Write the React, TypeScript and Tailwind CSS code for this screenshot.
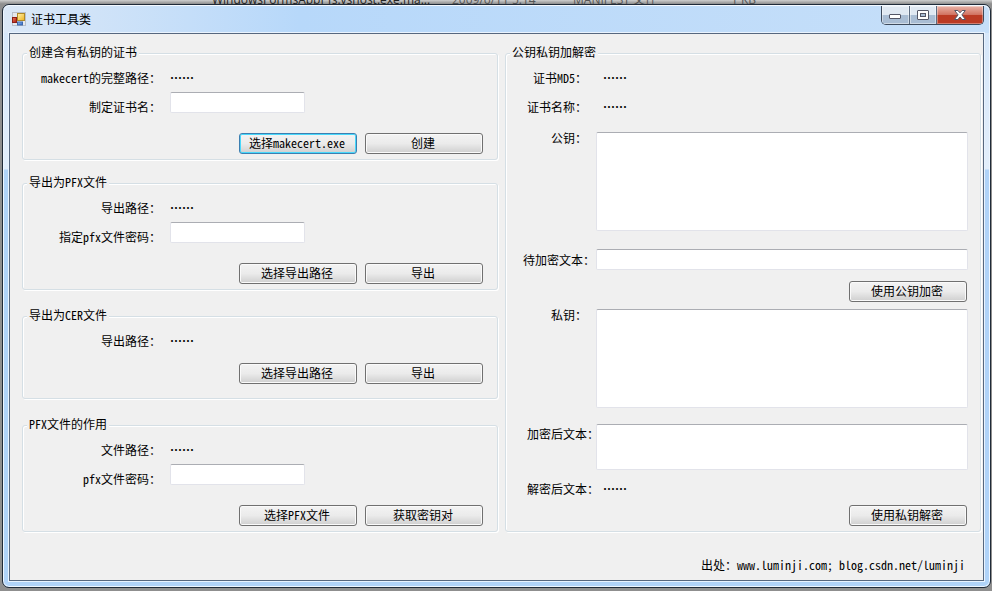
import { type ReactNode } from "react";
import clsx from "clsx";

const ui = "font-['Noto_Sans_CJK_SC','Liberation_Sans',sans-serif]";

/** Full-width characters with Latin runs set in the font's own half-width forms. */
function Mixed({ children }: { children: string }) {
  return (
    <>
      {children.split(/([\x20-\x7e]+)/).map((part, i) =>
        i % 2 ? (
          <span key={i} className="leading-none [font-feature-settings:'hwid']">
            {part}
          </span>
        ) : (
          part
        ),
      )}
    </>
  );
}

function PushButton({ children, focused = false }: { children: string; focused?: boolean }) {
  return (
    <button
      type="button"
      className={clsx(
        "flex h-[21px] w-[118px] items-center justify-center rounded-[3px] border bg-linear-to-b from-[#f3f3f3] from-0% via-[#ebebeb] via-50% to-[#cfcfcf] to-100% pr-[2px] pb-[2px] leading-5 whitespace-nowrap",
        focused
          ? "border-[#3c7fb1] shadow-[inset_0_0_0_1px_#48d8fb]"
          : "border-[#707070] shadow-[inset_0_0_0_1px_#fafafa]",
      )}
    >
      <span>
        <Mixed>{children}</Mixed>
      </span>
    </button>
  );
}

const box =
  "block resize-none rounded-[2px] border border-[#e2e3ea] border-t-[#abadb3] bg-white px-1 outline-none";

function GroupBox({ title, className, children }: { title: string; className?: string; children: ReactNode }) {
  return (
    <fieldset
      className={clsx(
        "flex min-w-0 flex-col rounded-[3px] border border-[#d5dfe5] shadow-[inset_1px_1px_0_#fff,1px_1px_0_#fff]",
        className,
      )}
    >
      <legend className="ml-1 h-[14px] bg-[#f0f0f0] px-[2px] leading-3 whitespace-nowrap">
        <Mixed>{title}</Mixed>
      </legend>
      {children}
    </fieldset>
  );
}

const leftLabel = "w-[138px] shrink-0 text-right leading-5 whitespace-nowrap";

function ValueRow({ id, label }: { id: string; label: string }) {
  return (
    <div className="mt-2 flex h-5 gap-[9px]">
      <label htmlFor={id} className={leftLabel}>
        <Mixed>{label}</Mixed>
      </label>
      <output id={id} className="leading-5 font-bold">……</output>
    </div>
  );
}

function InputRow({ id, label, type = "text" }: { id: string; label: string; type?: string }) {
  return (
    <div className="mt-1 flex h-[25px] items-start gap-[9px]">
      <label htmlFor={id} className={clsx(leftLabel, "pt-[5px]")}>
        <Mixed>{label}</Mixed>
      </label>
      <input id={id} type={type} className={clsx(box, "h-[21px] w-[135px]")} />
    </div>
  );
}

function ButtonRow({ className, children }: { className: string; children: ReactNode }) {
  return <div className={clsx("flex justify-end gap-2", className)}>{children}</div>;
}

const rightLabel = "w-[90px] shrink-0 leading-5 whitespace-nowrap";

function FormIcon() {
  return (
    <svg width="14" height="14" viewBox="0 0 14 14" aria-hidden="true">
      <defs>
        <linearGradient id="gold" x2="1" y2="1">
          <stop stopColor="#fff3b0" />
          <stop offset="1" stopColor="#efb21c" />
        </linearGradient>
        <linearGradient id="red" x2="1" y2="1">
          <stop stopColor="#f07a5c" />
          <stop offset="1" stopColor="#a81c10" />
        </linearGradient>
        <linearGradient id="blue" x2="1" y2="1">
          <stop stopColor="#9cc4f4" />
          <stop offset="1" stopColor="#2c62c0" />
        </linearGradient>
      </defs>
      <rect x="0.5" y="0.5" width="13" height="13" fill="#e6e9ee" stroke="#b9c0ca" />
      <rect x="5.5" y="1.5" width="7" height="7" fill="url(#gold)" stroke="#b08a28" />
      <rect x="0.5" y="5.5" width="4" height="5" fill="url(#red)" stroke="#8c2018" />
      <rect x="5.5" y="10" width="5" height="3" fill="url(#blue)" stroke="#3d68ac" />
    </svg>
  );
}

const caption =
  "flex items-center justify-center border-r border-[#5b6b80] shadow-[inset_0_0_0_1px_rgba(255,255,255,0.45)]";

function CaptionButtons() {
  return (
    <div className="flex h-[19px] overflow-hidden rounded-b-[5px] border border-t-0 border-[#3d4a5c]">
      <button
        type="button"
        aria-label="最小化"
        className={clsx(caption, "w-7 bg-linear-to-b from-[#dfe8f2] from-50% to-[#a9bdd4] to-50%")}
      >
        <svg width="13" height="6" viewBox="0 0 13 6" className="mt-1">
          <rect x="0.5" y="0.5" width="11" height="4" rx="0.5" fill="#fff" stroke="#535666" />
        </svg>
      </button>
      <button
        type="button"
        aria-label="最大化"
        className={clsx(caption, "w-[27px] bg-linear-to-b from-[#dfe8f2] from-50% to-[#a9bdd4] to-50%")}
      >
        <svg width="12" height="10" viewBox="0 0 12 10">
          <rect x="0.5" y="0.5" width="11" height="9" rx="0.5" fill="#fff" stroke="#535666" />
          <rect x="3.5" y="3.5" width="5" height="3" fill="#a9bdd4" stroke="#535666" />
        </svg>
      </button>
      <button
        type="button"
        aria-label="关闭"
        className="flex w-[46px] items-center justify-center bg-linear-to-b from-[#e8b3a8] from-0% via-[#d0705f] via-50% to-[#bb3a24] to-50% shadow-[inset_0_0_0_1px_rgba(255,255,255,0.35)]"
      >
        <svg width="12" height="10" viewBox="0 0 12 10">
          <path
            d="M.7.5h3.2L6 2.8 8.1.5h3.2L7.9 4.9l3.6 4.6H8.1L6 7 3.9 9.5H.5l3.6-4.6z"
            fill="#fff"
            stroke="#535666"
            strokeWidth="1"
          />
        </svg>
      </button>
    </div>
  );
}

export default function App() {
  return (
    <div
      lang="zh-CN"
      className={clsx(ui, "flex min-h-screen flex-col bg-[#8f8f8f] pr-px pb-[3px] pl-[2px] text-[12px] text-black")}
    >
      <div className="-mr-px -ml-[2px] flex h-1 items-end overflow-hidden bg-linear-to-b from-[#cfcfcf] to-[#8c8c8c] pl-[212px] font-['Open_Sans','Noto_Sans_CJK_SC',sans-serif] leading-2 whitespace-nowrap text-[#555]">
        <span className="w-[240px] text-[#222]">WindowsFormsAppPfs.vshost.exe.ma...</span>
        <span className="w-[121px]">2009/6/11 5:14</span>
        <span className="w-[158px]">MANIFEST 文件</span>
        <span>1 KB</span>
      </div>

      <div className="flex grow flex-col rounded-[7px] border border-[#1f2a38] bg-linear-to-b from-[#d3e5f9] from-0% via-[#e2eefb] via-[164px] to-[#b0d3f8] to-[165px] px-[6px] pb-[6px] shadow-[inset_0_0_0_1px_#eef6ff]">
        <header className="-mx-[5px] flex h-7 items-start justify-between rounded-t-[6px] border-t border-[#f4f9ff] bg-linear-to-r from-[#dbe8f7] via-[#b7d8fa] via-30% to-[#c6dff9] pr-[5px] pl-2">
          <div className="flex h-[26px] items-center gap-[5px]">
            <FormIcon />
            <h1 className="leading-5">证书工具类</h1>
          </div>
          <CaptionButtons />
        </header>

        <main className="flex grow flex-col border border-[#56677f] bg-[#f0f0f0] pt-3 pr-[2px] pl-3 shadow-[0_0_0_1px_#e9f3fe]">
          <div className="grid grid-cols-2 gap-[7px]">
            <div className="flex flex-col">
              <GroupBox title="创建含有私钥的证书" className="pb-[5px]">
                <ValueRow id="makecert-path" label="makecert的完整路径：" />
                <InputRow id="cert-name" label="制定证书名：" />
                <ButtonRow className="mt-4 pr-[14px]">
                  <PushButton focused>选择makecert.exe</PushButton>
                  <PushButton>创建</PushButton>
                </ButtonRow>
              </GroupBox>

              <GroupBox title="导出为PFX文件" className="mt-4 pb-[5px]">
                <ValueRow id="pfx-out" label="导出路径：" />
                <InputRow id="pfx-out-password" type="password" label="指定pfx文件密码：" />
                <ButtonRow className="mt-4 pr-[14px]">
                  <PushButton>选择导出路径</PushButton>
                  <PushButton>导出</PushButton>
                </ButtonRow>
              </GroupBox>

              <GroupBox title="导出为CER文件" className="mt-[19px] pb-[14px]">
                <ValueRow id="cer-out" label="导出路径：" />
                <ButtonRow className="mt-3 pr-[14px]">
                  <PushButton>选择导出路径</PushButton>
                  <PushButton>导出</PushButton>
                </ButtonRow>
              </GroupBox>

              <GroupBox title="PFX文件的作用" className="mt-[19px] pb-[5px]">
                <ValueRow id="pfx-file" label="文件路径：" />
                <InputRow id="pfx-password" type="password" label="pfx文件密码：" />
                <ButtonRow className="mt-4 pr-[14px]">
                  <PushButton>选择PFX文件</PushButton>
                  <PushButton>获取密钥对</PushButton>
                </ButtonRow>
              </GroupBox>
            </div>

            <GroupBox title="公钥私钥加解密" className="pb-1">
              <div className="mt-2 flex h-5 pr-3">
                <label htmlFor="md5" className={clsx(rightLabel, "pl-[27px]")}>
                  <Mixed>证书MD5：</Mixed>
                </label>
                <output id="md5" className="pl-[7px] leading-5 font-bold">……</output>
              </div>
              <div className="mt-[9px] flex h-5 pr-3">
                <label htmlFor="subject" className={clsx(rightLabel, "pl-[21px]")}>证书名称：</label>
                <output id="subject" className="pl-[7px] leading-5 font-bold">……</output>
              </div>
              <div className="mt-[15px] flex items-start pr-3">
                <label htmlFor="public-key" className={clsx(rightLabel, "-mt-1 pl-[45px]")}>公钥：</label>
                <textarea id="public-key" className={clsx(box, "h-[99px] min-w-0 grow")} />
              </div>
              <div className="mt-[18px] flex items-center pr-3">
                <label htmlFor="plain" className={clsx(rightLabel, "pl-[17px]")}>待加密文本：</label>
                <input id="plain" type="text" className={clsx(box, "h-[21px] min-w-0 grow")} />
              </div>
              <ButtonRow className="mt-[11px] pr-[13px]">
                <PushButton>使用公钥加密</PushButton>
              </ButtonRow>
              <div className="mt-[7px] flex items-start pr-3">
                <label htmlFor="private-key" className={clsx(rightLabel, "-mt-1 pl-[45px]")}>私钥：</label>
                <textarea id="private-key" className={clsx(box, "h-[99px] min-w-0 grow")} />
              </div>
              <div className="mt-4 flex items-start pr-3">
                <label htmlFor="cipher" className={clsx(rightLabel, "pl-[21px]")}>加密后文本：</label>
                <textarea id="cipher" className={clsx(box, "h-[46px] min-w-0 grow")} />
              </div>
              <div className="mt-[9px] flex pr-3">
                <label htmlFor="decrypted" className={clsx(rightLabel, "pl-[21px]")}>解密后文本：</label>
                <output id="decrypted" className="pl-[7px] leading-5 font-bold">……</output>
              </div>
              <ButtonRow className="mt-[6px] pr-[13px]">
                <PushButton>使用私钥解密</PushButton>
              </ButtonRow>
            </GroupBox>
          </div>

          <footer className="pt-[23px] pr-4 pb-1 text-right leading-5">
            <Mixed>出处：www.luminji.com; blog.csdn.net/luminji</Mixed>
          </footer>
        </main>
      </div>
    </div>
  );
}
